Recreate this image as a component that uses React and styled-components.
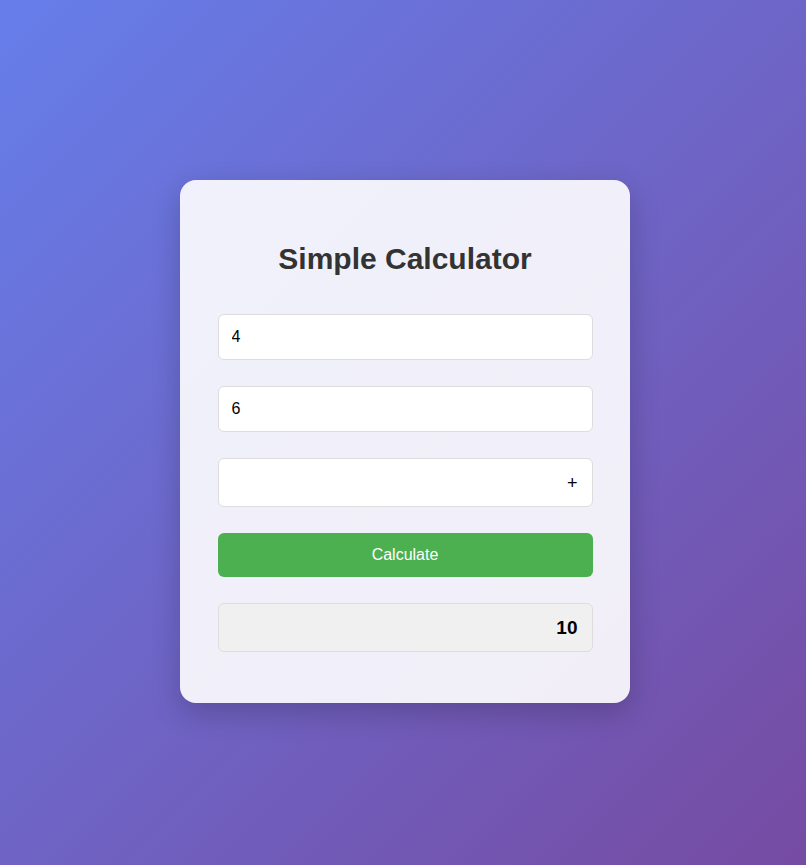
import { useState } from "react";
import styled, { createGlobalStyle } from "styled-components";

const GlobalStyle = createGlobalStyle`
  * { box-sizing: border-box; }
  html, body {
    margin: 0;
    padding: 0;
    font-family: "Liberation Sans", Arial, sans-serif;
  }
`;

export default function App() {
  const [a, setA] = useState("4");
  const [b, setB] = useState("6");
  const [op, setOp] = useState("+");
  const [result, setResult] = useState(10);

  const calculate = () => {
    const x = parseFloat(a);
    const y = parseFloat(b);
    if (isNaN(x) || isNaN(y)) return setResult("");
    if (op === "+") setResult(x + y);
    if (op === "-") setResult(x - y);
    if (op === "*") setResult(x * y);
    if (op === "/") setResult(y === 0 ? "Error" : x / y);
  };

  return (
    <Page>
      <GlobalStyle />
      <Card>
        <Title>Simple Calculator</Title>
        <Field value={a} onChange={(e) => setA(e.target.value)} />
        <Field value={b} onChange={(e) => setB(e.target.value)} />
        <Select value={op} onChange={(e) => setOp(e.target.value)}>
          <option value="+">+</option>
          <option value="-">-</option>
          <option value="*">*</option>
          <option value="/">/</option>
        </Select>
        <Button onClick={calculate}>Calculate</Button>
        <Result>{result}</Result>
      </Card>
    </Page>
  );
}

const Page = styled.div`
  min-height: 100vh;
  display: flex;
  align-items: center;
  justify-content: center;
  padding: 18px 0 0 4px;
  background: linear-gradient(135deg, #667eea 0%, #764ba2 100%);
`;

const Card = styled.div`
  width: 450px;
  display: flex;
  flex-direction: column;
  gap: 26px;
  padding: 61px 37.5px 51px;
  background: rgba(255, 255, 255, 0.9);
  border-radius: 16px;
  box-shadow: 0 10px 30px rgba(0, 0, 0, 0.2);
`;

const Title = styled.h2`
  margin: 0 0 12px;
  text-align: center;
  font-size: 30px;
  line-height: 35px;
  font-weight: bold;
  color: #333;
`;

const Field = styled.input`
  height: 46px;
  width: 100%;
  padding: 0 13px;
  font-family: inherit;
  font-size: 16px;
  color: #000;
  background: #fff;
  border: 1px solid #ddd;
  border-radius: 6px;
  outline: none;
`;

const Select = styled.select`
  height: 49px;
  width: 100%;
  padding: 0 14px;
  font-family: inherit;
  font-size: 18px;
  color: #000;
  background: #fff;
  border: 1px solid #ddd;
  border-radius: 6px;
  appearance: none;
  text-align-last: right;
  outline: none;
`;

const Button = styled.button`
  height: 44px;
  width: 100%;
  font-family: inherit;
  font-size: 16px;
  color: #fff;
  background: #4caf50;
  border: none;
  border-radius: 6px;
  cursor: pointer;
`;

const Result = styled.div`
  height: 49px;
  display: flex;
  align-items: center;
  justify-content: flex-end;
  padding: 0 14px;
  font-size: 19px;
  font-weight: bold;
  color: #000;
  background: #f0f0f0;
  border: 1px solid #ddd;
  border-radius: 6px;
`;
